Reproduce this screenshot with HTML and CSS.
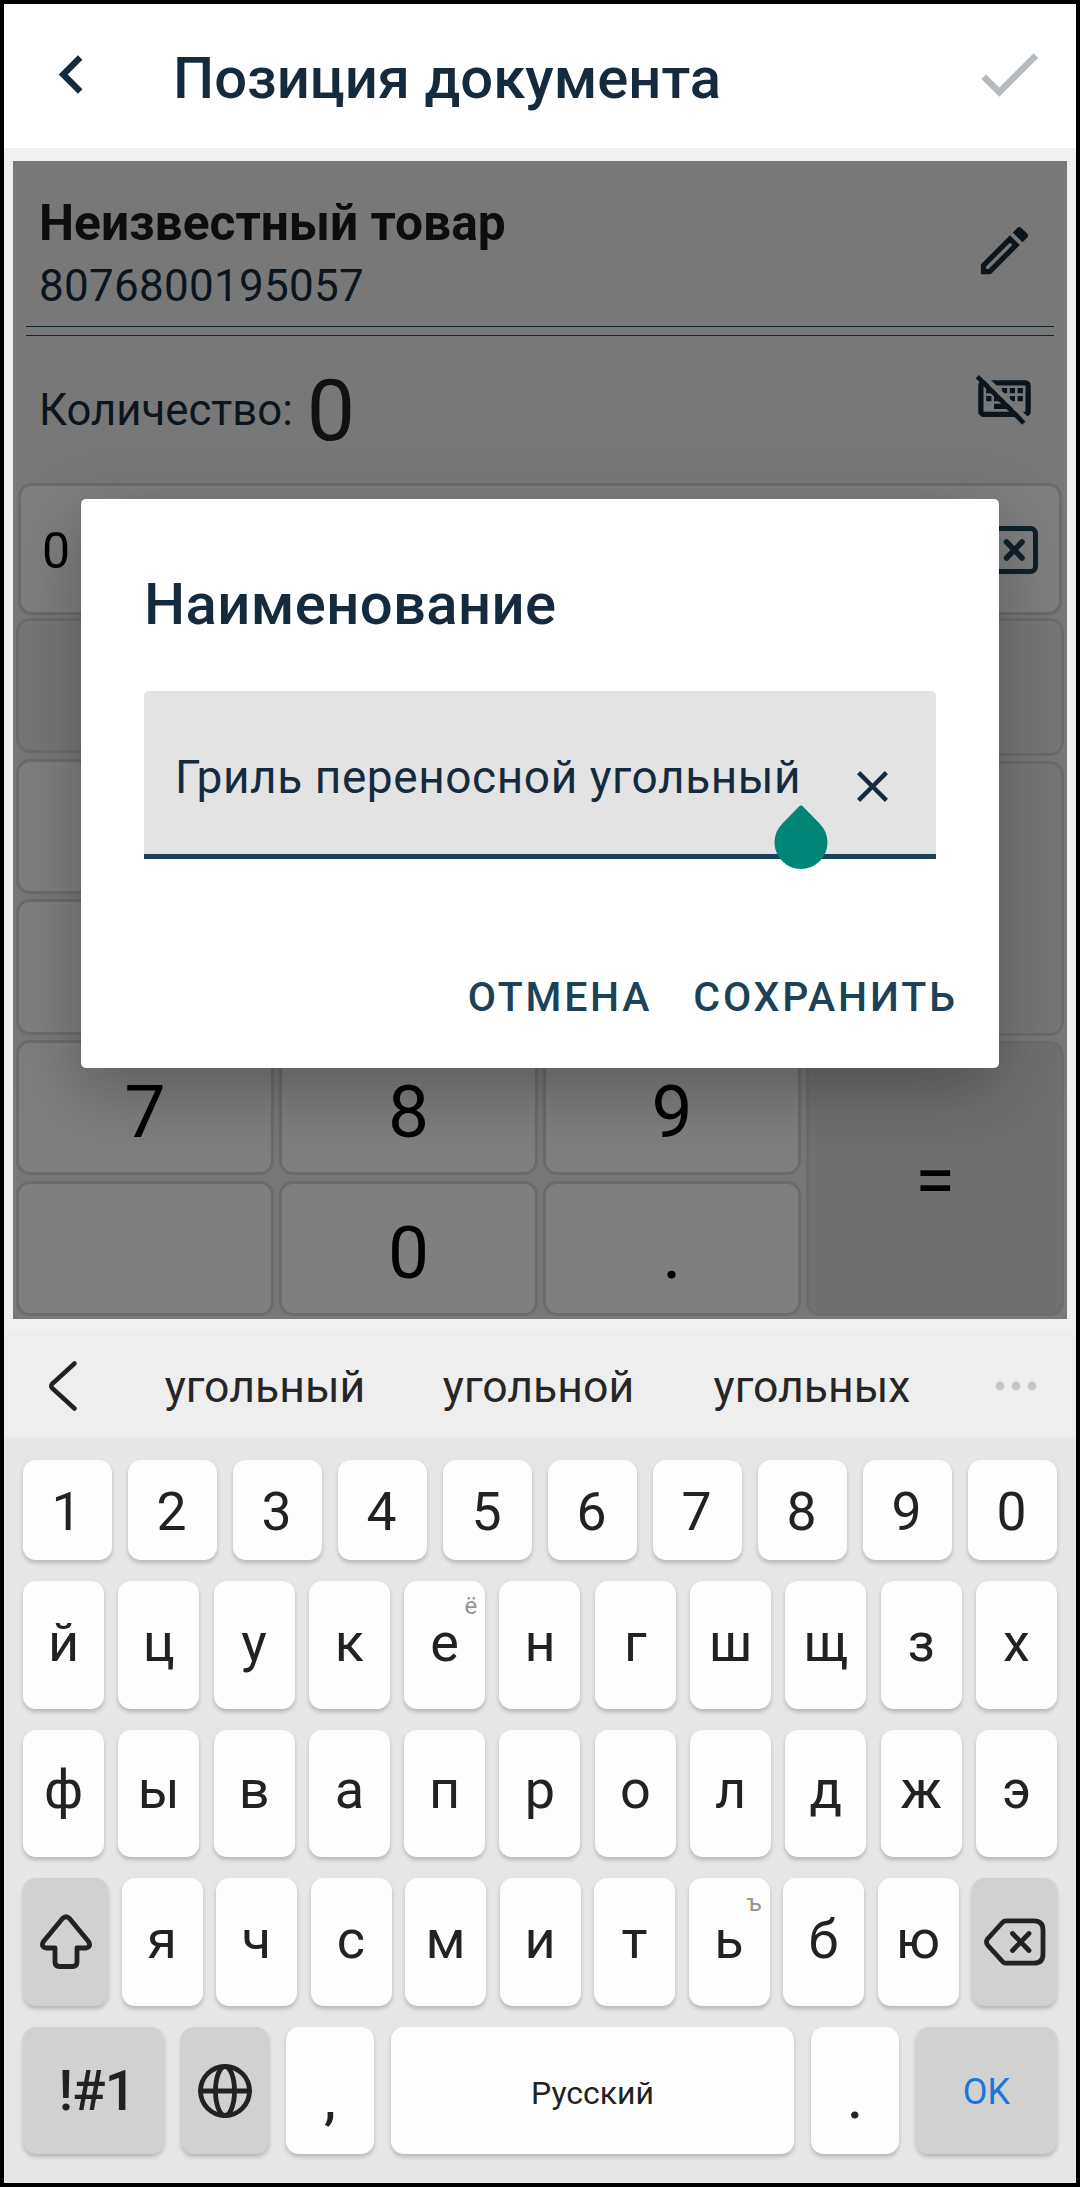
FILE: index.html
```html
<!DOCTYPE html>
<html lang="ru">
<head>
<meta charset="utf-8">
<title>Позиция документа</title>
<link rel="stylesheet" href="styles.css">
</head>
<body>
<div class="screen">
  <header class="appbar">
    <svg class="appbar-back" viewBox="0 0 24 24"><path d="M15.41,16.58L10.83,12L15.41,7.41L14,6L8,12L14,18L15.41,16.58Z"/></svg>
    <h1 class="appbar-title">Позиция документа</h1>
    <svg class="appbar-done" viewBox="0 0 24 24"><path d="M21,7L9,19L3.5,13.5L4.91,12.09L9,16.17L19.59,5.59L21,7Z"/></svg>
  </header>

  <main class="panel">
    <section class="item">
      <div class="item-text">
        <div class="item-name">Неизвестный товар</div>
        <div class="item-code">8076800195057</div>
      </div>
      <svg class="icon" viewBox="0 0 24 24"><path d="M14.06,9L15,9.94L5.92,19H5V18.08L14.06,9M17.66,3C17.41,3 17.15,3.1 16.96,3.29L15.13,5.12L18.88,8.87L20.71,7.04C21.1,6.65 21.1,6 20.71,5.63L18.37,3.29C18.17,3.09 17.92,3 17.66,3M14.06,6.19L3,17.25V21H6.75L17.81,9.94L14.06,6.19Z"/></svg>
    </section>
    <div class="rule"></div>
    <section class="qty">
      <span class="qty-label">Количество:</span>
      <span class="qty-value">0</span>
      <svg class="icon qty-icon" viewBox="0 0 24 24">
        <mask id="cut"><rect width="24" height="24" fill="#fff"/><path d="M0.5,1.2L4.3,2.4L24,22.1L20,20.7Z" fill="#000"/></mask>
        <g mask="url(#cut)">
          <path fill-rule="evenodd" d="M4,5H20A2,2 0 0 1 22,7V17A2,2 0 0 1 20,19H4A2,2 0 0 1 2,17V7A2,2 0 0 1 4,5ZM4,7V17H20V7Z"/>
          <path d="M5,8h2v2h-2zM8,8h2v2h-2zM11,8h2v2h-2zM14,8h2v2h-2zM17,8h2v2h-2zM5,11h2v2h-2zM8,11h2v2h-2zM11,11h2v2h-2zM14,11h2v2h-2zM17,11h2v2h-2zM8,14h8v2h-8z"/>
        </g>
        <path d="M1,4.27L2.28,3L20,20.72L18.73,22Z"/>
      </svg>
    </section>
    <div class="entry">
      <span>0</span>
      <svg class="entry-erase" viewBox="0 0 66 48">
        <path d="M22,2.500H58.500A5,5 0 0 1 63.500,7.500V40.500A5,5 0 0 1 58.500,45.500H22L3,24Z" fill="none" stroke="#1d4257" stroke-width="5" stroke-linejoin="round"/>
        <path d="M34.500,16L50,32M50,16L34.500,32" fill="none" stroke="#1d4257" stroke-width="5.500" stroke-linecap="round"/>
      </svg>
    </div>
    <div class="pad">
      <div class="pad-main">
        <div class="cell op"></div><div class="cell op"></div><div class="cell op"></div>
        <div class="cell"></div><div class="cell"></div><div class="cell"></div>
        <div class="cell"></div><div class="cell"></div><div class="cell"></div>
        <div class="cell">7</div><div class="cell">8</div><div class="cell">9</div>
        <div class="cell"></div><div class="cell">0</div><div class="cell">.</div>
      </div>
      <div class="pad-side">
        <div class="cell op"></div>
        <div class="cell op"></div>
        <div class="cell equals">=</div>
      </div>
    </div>
    <div class="scrim">
      <section class="dialog">
        <h2 class="dialog-title">Наименование</h2>
        <div class="field">
          <span>Гриль переносной угольный</span>
          <svg class="field-clear" viewBox="0 0 24 24"><path d="M19,6.41L17.59,5L12,10.59L6.41,5L5,6.41L10.59,12L5,17.59L6.41,19L12,13.41L17.59,19L19,17.59L13.41,12L19,6.41Z"/></svg>
          <svg class="handle" viewBox="0 0 54 64"><path d="M27,0.500Q28,0.500 29,1.500L46,19A26.500,26.500 0 1 1 8,19L25,1.500Q26,0.500 27,0.500Z"/></svg>
        </div>
        <div class="actions"><span>ОТМЕНА</span><span>СОХРАНИТЬ</span></div>
      </section>
    </div>
  </main>

  <div class="suggest">
    <svg class="suggest-back" viewBox="0 0 30 50"><path d="M26.500,2.500L4,23Q2.500,25 4,27L26.500,47.500"/></svg>
    <div class="words"><span>угольный</span><span>угольной</span><span>угольных</span></div>
    <svg class="suggest-more" viewBox="0 0 42 10"><circle cx="5" cy="5" r="4.400"/><circle cx="21" cy="5" r="4.400"/><circle cx="37" cy="5" r="4.400"/></svg>
  </div>

  <div class="keyboard">
    <div class="row digits"><b>1</b><b>2</b><b>3</b><b>4</b><b>5</b><b>6</b><b>7</b><b>8</b><b>9</b><b>0</b></div>
    <div class="row letters"><b>й</b><b>ц</b><b>у</b><b>к</b><b>е<i>ё</i></b><b>н</b><b>г</b><b>ш</b><b>щ</b><b>з</b><b>х</b></div>
    <div class="row letters low"><b>ф</b><b>ы</b><b>в</b><b>а</b><b>п</b><b>р</b><b>о</b><b>л</b><b>д</b><b>ж</b><b>э</b></div>
    <div class="row letters third">
      <b class="mod"><svg class="k-shift" viewBox="0 0 54 56"><path d="M23.500,4.500Q27,1 30.500,4.500L49.500,27.500Q52.500,33 47,34H38V48Q38,52.500 33.500,52.500H20.500Q16,52.500 16,48V34H7Q1.500,33 4.500,27.500Z"/></svg></b>
      <b>я</b><b>ч</b><b>с</b><b>м</b><b>и</b><b>т</b><b>ь<i>ъ</i></b><b>б</b><b>ю</b>
      <b class="mod"><svg class="k-erase" viewBox="0 0 62 48"><path d="M22,2.800H50Q59,2.800 59,12V36Q59,45.200 50,45.200H22Q20,45.200 18.500,43.500L3.500,27Q1.500,24 3.500,21L18.500,4.500Q20,2.800 22,2.800ZM28.500,15.500L45,32.500M45,15.500L28.500,32.500"/></svg></b>
    </div>
    <div class="row bottom">
      <b class="mod sym">!#1</b>
      <b class="mod"><svg class="k-globe" viewBox="0 0 56 56"><circle cx="28" cy="28" r="24.500"/><ellipse cx="28" cy="28" rx="9.500" ry="24.500"/><path d="M3.500,28H52.500"/></svg></b>
      <b class="punct">,</b>
      <b class="space">Русский</b>
      <b class="punct">.</b>
      <b class="mod ok">OK</b>
    </div>
  </div>
</div>
</body>
</html>
```
FILE: styles.css
```css
* { box-sizing: border-box; }
body { margin: 0; font-family: Roboto, sans-serif; }
svg { display: block; flex: none; }

.screen {
  width: 1080px;
  height: 2187px;
  border: 4px solid #000;
  background: #f0f0f0;
  display: flex;
  flex-direction: column;
}

/* App bar */
.appbar {
  height: 144px;
  flex: none;
  padding: 0 28px 4px 29px;
  background: #fff;
  display: flex;
  align-items: center;
}
.appbar-back { width: 77px; height: 77px; fill: #152a3d; }
.appbar-title {
  margin: 7px auto 0 63px;
  font-size: 58px;
  font-weight: 500;
  line-height: 70px;
  color: #152a3d;
}
.appbar-done { width: 78px; height: 78px; fill: #b3bbc0; }

/* Document position panel */
.panel {
  position: relative;
  height: 1158px;
  flex: none;
  margin: 13px 9px 0;
  background: #f0f0f0;
  overflow: hidden;
  display: flex;
  flex-direction: column;
}
.icon { width: 63px; height: 63px; fill: #152a3d; }
.item {
  height: 165px;
  padding: 31px 31px 0 26px;
  display: flex;
  justify-content: space-between;
}
.item .icon { margin-top: 27px; }
.item-name { font-size: 49.7px; font-weight: 700; line-height: 62px; color: #1b1b1b; }
.item-code { font-size: 44px; line-height: 64px; letter-spacing: 0.28px; color: #152a3d; }
.rule { height: 10px; margin: 0 13px; border: solid #1f4257; border-width: 1px 0; }
.qty { height: 147px; padding: 3px 31px 0 26px; display: flex; align-items: center; }
.qty-label { margin-top: -2px; font-size: 43.7px; color: #152a3d; }
.qty-value { margin-left: 14px; font-size: 86px; line-height: 100px; color: #222; }
.qty-icon { align-self: flex-start; margin: 28px 0 0 auto; }
.entry {
  height: 132px;
  margin: 0 5px;
  padding: 4px 21px 0;
  border: 3px solid #d8d8d8;
  border-radius: 14px;
  background: #fff;
  display: flex;
  align-items: center;
  justify-content: space-between;
  font-size: 50px;
}
.entry-erase { width: 66px; height: 48px; margin-top: -3px; }
.pad { height: 698px; margin: 3px 3px 0; display: flex; gap: 5px; }
.pad-main {
  width: 785px;
  display: grid;
  grid-template-columns: repeat(3, 1fr);
  grid-template-rows: repeat(5, 1fr);
  gap: 5.300px;
}
.pad-side { flex: 1; display: grid; grid-template-rows: 138fr 276fr 275fr; gap: 5px; }
.cell {
  padding-top: 9px;
  border: 3px solid #d8d8d8;
  border-radius: 14px;
  background: #fff;
  display: flex;
  align-items: center;
  justify-content: center;
  font-size: 73px;
  line-height: 80px;
}
.op { background: #efefef; }
.equals { padding-top: 3px; background: #e1e1e1; border-color: #d9d9d9; }

/* Dialog */
.scrim { position: absolute; inset: 0; padding: 338px 68px 0; background: rgba(0, 0, 0, 0.5); }
.dialog {
  height: 569px;
  padding: 65px 41.300px 0 63px;
  border-radius: 5px;
  background: #fff;
  box-shadow: 0 22px 70px rgba(0, 0, 0, 0.29);
}
.dialog-title {
  margin: 0;
  font-size: 58px;
  font-weight: 500;
  line-height: 80px;
  letter-spacing: 0.4px;
  color: #152a3d;
}
.field {
  position: relative;
  width: 792px;
  height: 168px;
  margin-top: 47px;
  padding: 8px 37px 0 31px;
  border-bottom: 5px solid #1d4257;
  border-radius: 5px 5px 0 0;
  background: #e3e3e3;
  display: flex;
  align-items: center;
  justify-content: space-between;
  font-size: 46px;
  letter-spacing: 0.570px;
  color: #152a3d;
}
.field-clear { width: 53px; height: 53px; margin-top: 19px; fill: #152a3d; }
.handle { position: absolute; left: 630px; top: 114px; width: 54px; height: 64px; fill: #008577; }
.actions {
  margin-top: 108px;
  display: flex;
  justify-content: flex-end;
  gap: 41px;
  font-size: 41px;
  font-weight: 500;
  line-height: 60px;
  letter-spacing: 2.800px;
  color: #1d4257;
}

/* Suggestion strip */
.suggest {
  height: 105px;
  flex: none;
  margin-top: 13px;
  padding: 0 39px 0 44px;
  background: #eee;
  display: flex;
  align-items: center;
}
.suggest-back { width: 30px; height: 50px; margin-top: 2px; fill: none; stroke: #222; stroke-width: 4.500px; stroke-linecap: round; }
.words {
  flex: 1;
  margin-left: 48px;
  margin-right: 44px;
  padding-top: 4px;
  display: grid;
  grid-template-columns: repeat(3, 273.500px);
  justify-content: center;
  text-align: center;
  font-size: 44.600px;
  color: #262626;
}
.suggest-more { width: 42px; height: 10px; margin-top: 3px; fill: #c6c6c6; }

/* Keyboard */
.keyboard {
  flex: 1;
  padding: 23px 19px 0;
  background: #e6e6e6;
  display: flex;
  flex-direction: column;
  gap: 21px;
}
.row { display: flex; justify-content: space-between; }
.row b {
  position: relative;
  width: 81px;
  height: 128px;
  border-radius: 13px;
  background: #fdfdfd;
  box-shadow: 0 3px 4px rgba(0, 0, 0, 0.2);
  display: flex;
  align-items: center;
  justify-content: center;
  font-size: 54px;
  font-weight: 400;
  line-height: 60px;
  color: #222;
}
.row i {
  position: absolute;
  top: 11px;
  right: 8px;
  font-size: 24px;
  font-style: normal;
  line-height: 28px;
  color: #949494;
}
.row .mod { background: #d1d1d1; }
.row svg { fill: none; stroke: #222; stroke-width: 4.800px; stroke-linecap: round; stroke-linejoin: round; }
.digits b { width: 89px; height: 100px; padding: 4px 2px 0 0; font-size: 53.500px; }
.letters b { padding-bottom: 5px; }
.low b { height: 127px; padding-bottom: 7px; }
.third .mod { width: 85px; padding: 0; }
.k-shift { width: 54px; height: 56px; }
.k-erase { width: 62px; height: 48px; }
.k-globe { width: 56px; height: 56px; }
.bottom b { width: 88px; height: 127px; }
.bottom .sym { width: 141px; padding-left: 7px; font-size: 55px; font-weight: 500; letter-spacing: -0.700px; }
.bottom .space { width: 403px; padding-top: 4px; font-size: 32px; }
.bottom .ok { width: 141px; padding-top: 3px; font-size: 36px; color: #1a76d8; }
.bottom .punct { padding-top: 18px; font-weight: 500; }
```
